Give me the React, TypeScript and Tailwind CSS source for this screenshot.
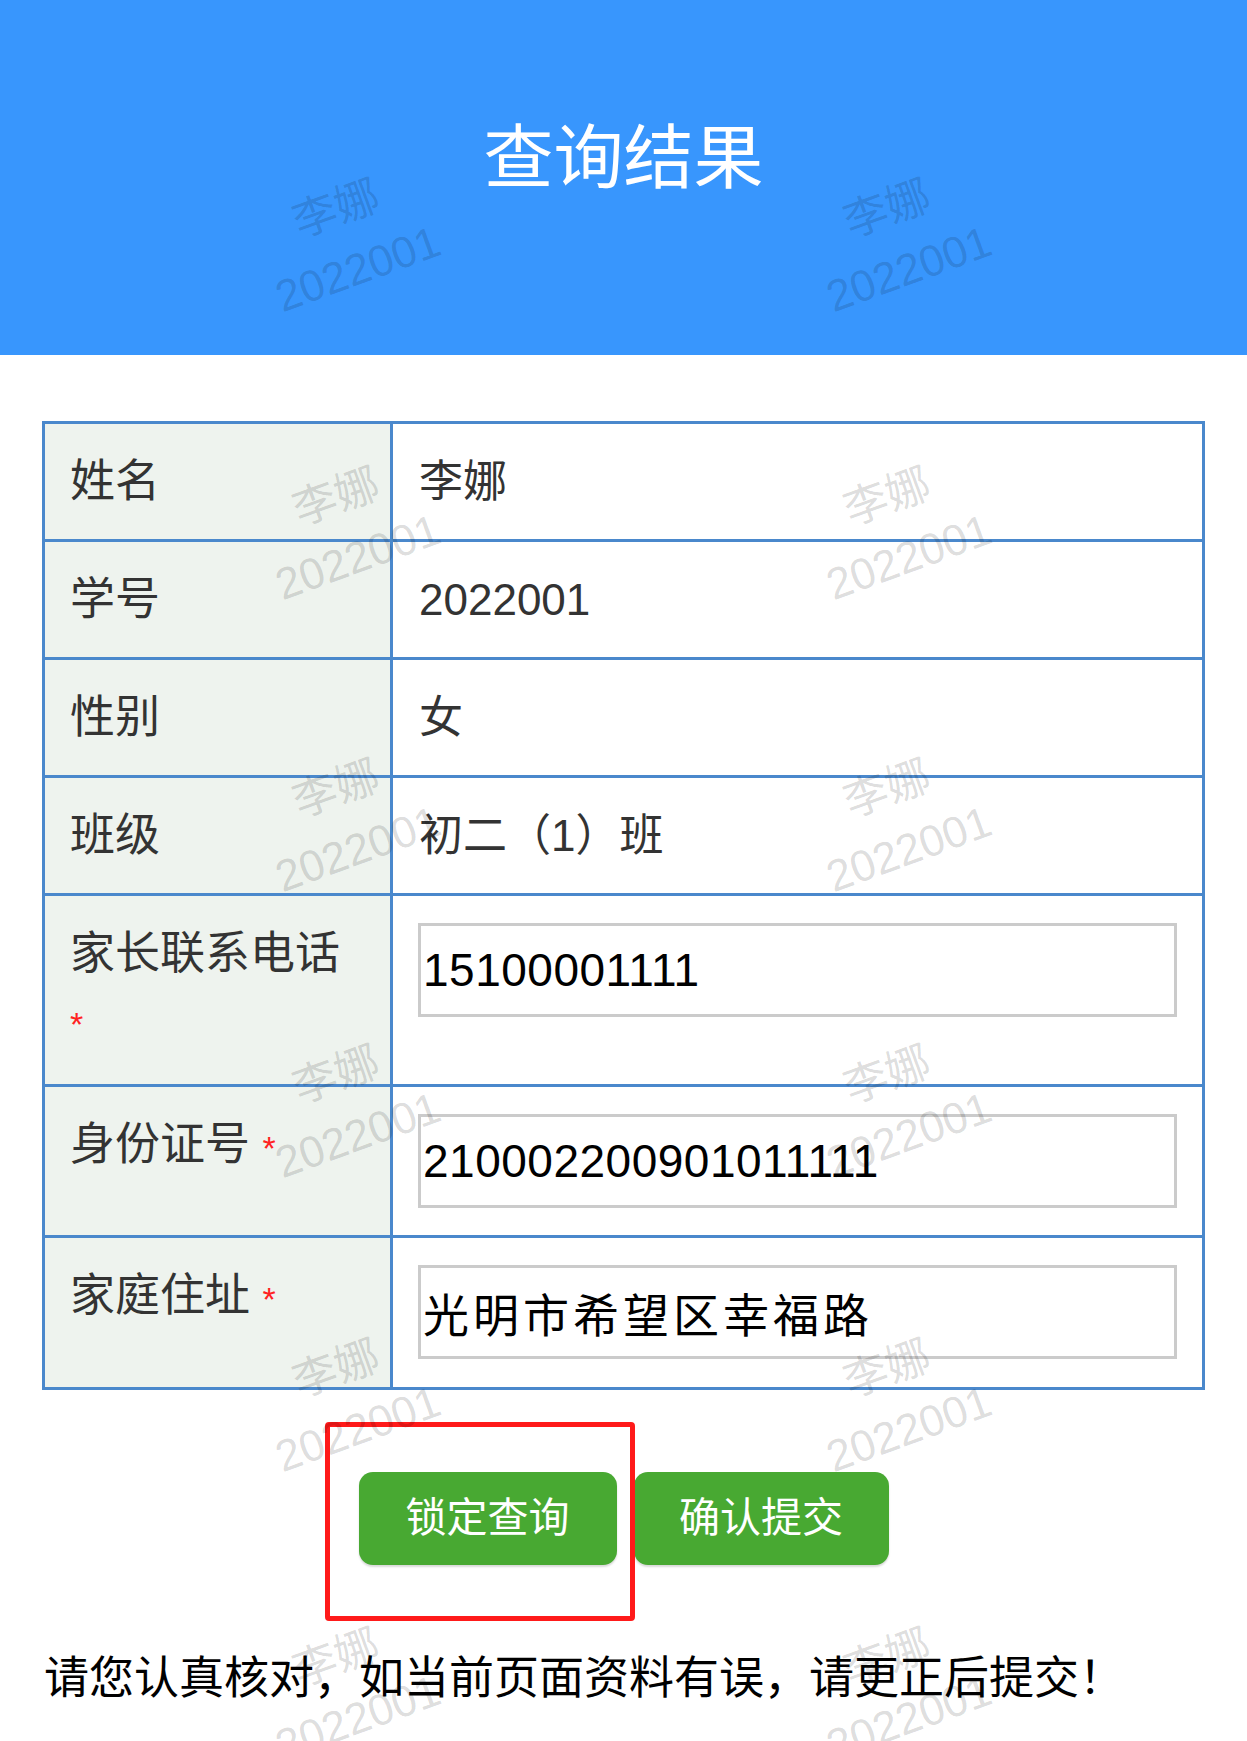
import React from "react";

const rows = [
  { label: "姓名", value: "李娜" },
  { label: "学号", value: "2022001" },
  { label: "性别", value: "女" },
  { label: "班级", value: "初二（1）班" },
];

const inputs = [
  { label: "家长联系电话", value: "15100001111", h: "h-[191px]", wide: false },
  { label: "身份证号", value: "210002200901011111", h: "h-[151px]", wide: false },
  { label: "家庭住址", value: "光明市希望区幸福路", h: "h-[152px]", wide: true },
];

const marksX = [347, 898];
const marksY = [239, 527, 819, 1105, 1399, 1688];

function Watermarks() {
  return (
    <div className="pointer-events-none absolute inset-0 z-20 overflow-hidden">
      {marksY.map((y) =>
        marksX.map((x) => (
          <div
            key={`${x}-${y}`}
            className="absolute -translate-x-1/2 -translate-y-1/2 -rotate-20 whitespace-nowrap text-center text-[44px] leading-[64px] text-black/15"
            style={{ left: x, top: y }}
          >
            <div>李娜</div>
            <div>2022001</div>
          </div>
        ))
      )}
    </div>
  );
}

export default function App() {
  return (
    <div className="relative min-h-[1741px] w-full overflow-hidden bg-white font-['Liberation_Sans','Noto_Sans_CJK_SC',sans-serif]">
      <header className="flex h-[355px] justify-center bg-[#3896fd] pt-[124px]">
        <h1 className="text-[70px] leading-[70px] text-white">查询结果</h1>
      </header>

      <main className="px-[42px] pt-[66px]">
        <table className="w-full border-collapse border-[3px] border-[#4a88cc]">
          <tbody>
            {rows.map((r) => (
              <tr key={r.label} className="h-[118px]">
                <td className="w-[348px] border-[3px] border-[#4a88cc] bg-[#eef3ee] pl-[25px] pt-[24px] align-top text-[45px] leading-[67px] text-[#333]">
                  {r.label}
                </td>
                <td className="border-[3px] border-[#4a88cc] pl-[26px] pt-[24px] align-top text-[44px] leading-[67px] text-[#333]">
                  {r.value}
                </td>
              </tr>
            ))}
            {inputs.map((r) => (
              <tr key={r.label} className={r.h}>
                <td className="w-[348px] border-[3px] border-[#4a88cc] bg-[#eef3ee] pl-[25px] pr-[30px] pt-[24px] align-top text-[45px] leading-[67px] text-[#333]">
                  {r.label} <span className="text-[34px] text-[#f22]">*</span>
                </td>
                <td className="border-[3px] border-[#4a88cc] px-[25px] pt-[27px] align-top">
                  <input
                    readOnly
                    value={r.value}
                    className={`h-[94px] w-full border-[3px] border-[#cbcbcb] bg-white pl-[2px] text-[46px] text-black outline-none ${r.wide ? "tracking-[4px]" : "tracking-[0.5px]"}`}
                  />
                </td>
              </tr>
            ))}
          </tbody>
        </table>

        <div className="relative mt-[82px] flex justify-center gap-[17px]">
          <button className="h-[93px] w-[258px] rounded-[14px] bg-[#48a932] text-[41px] text-white shadow-[0_2px_2px_rgba(0,0,0,0.15)]">
            锁定查询
          </button>
          <button className="h-[93px] w-[255px] rounded-[14px] bg-[#48a932] text-[41px] text-white shadow-[0_2px_2px_rgba(0,0,0,0.15)]">
            确认提交
          </button>
          <div className="pointer-events-none absolute left-[283px] top-[-50px] h-[199px] w-[310px] rounded-[4px] border-[5px] border-[#ff1a1a]" />
        </div>

        <p className="mt-[80px] pl-[2px] text-[45px] leading-[67px] text-black">
          请您认真核对，如当前页面资料有误，请更正后提交！
        </p>
      </main>

      <Watermarks />
    </div>
  );
}
